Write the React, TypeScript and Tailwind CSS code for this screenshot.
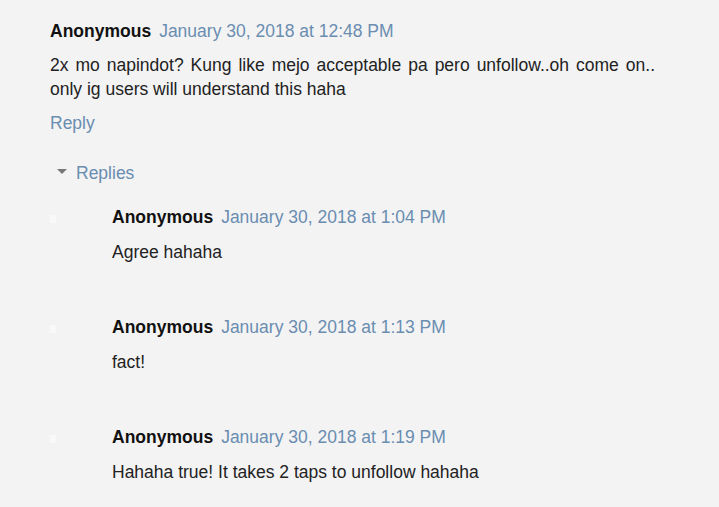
import React from "react";

const replies = [
  { date: "January 30, 2018 at 1:04 PM", text: "Agree hahaha" },
  { date: "January 30, 2018 at 1:13 PM", text: "fact!" },
  { date: "January 30, 2018 at 1:19 PM", text: "Hahaha true! It takes 2 taps to unfollow hahaha" },
];

export default function App() {
  return (
    <div
      className="w-[719px] h-[507px] overflow-hidden bg-[#f3f3f4] text-[#222] text-[17.5px] leading-[24px]"
      style={{ fontFamily: '"Liberation Sans", Arial, sans-serif' }}
    >
      <div className="pl-[50px] pt-[19px]">
        <div className="flex gap-[8px]">
          <span className="font-bold text-[#111]">Anonymous</span>
          <span className="text-[#6a8db0]">January 30, 2018 at 12:48 PM</span>
        </div>
        <p className="mt-[10px] w-[605px] text-justify">
          2x mo napindot? Kung like mejo acceptable pa pero unfollow..oh come on.. only ig users will understand this haha
        </p>
        <div className="mt-[10px] text-[#6a8db0]">Reply</div>
        <div className="mt-[26px] flex items-center">
          <svg width="12" height="8" viewBox="0 0 12 8" className="ml-[6px] mr-[8px] -mt-[3px]">
            <polygon points="1,1 11,1 6,6" fill="#777" />
          </svg>
          <span className="text-[#6a8db0]">Replies</span>
        </div>
        <div className="mt-[20px]">
          {replies.map((r, i) => (
            <div key={i} className="flex h-[110px]">
              <div className="w-[62px] pt-[10px]">
                <div className="w-[6px] h-[8px] bg-white/40" />
              </div>
              <div>
                <div className="flex gap-[8px]">
                  <span className="font-bold text-[#111]">Anonymous</span>
                  <span className="text-[#6a8db0]">{r.date}</span>
                </div>
                <p className="mt-[11px]">{r.text}</p>
              </div>
            </div>
          ))}
        </div>
      </div>
    </div>
  );
}
